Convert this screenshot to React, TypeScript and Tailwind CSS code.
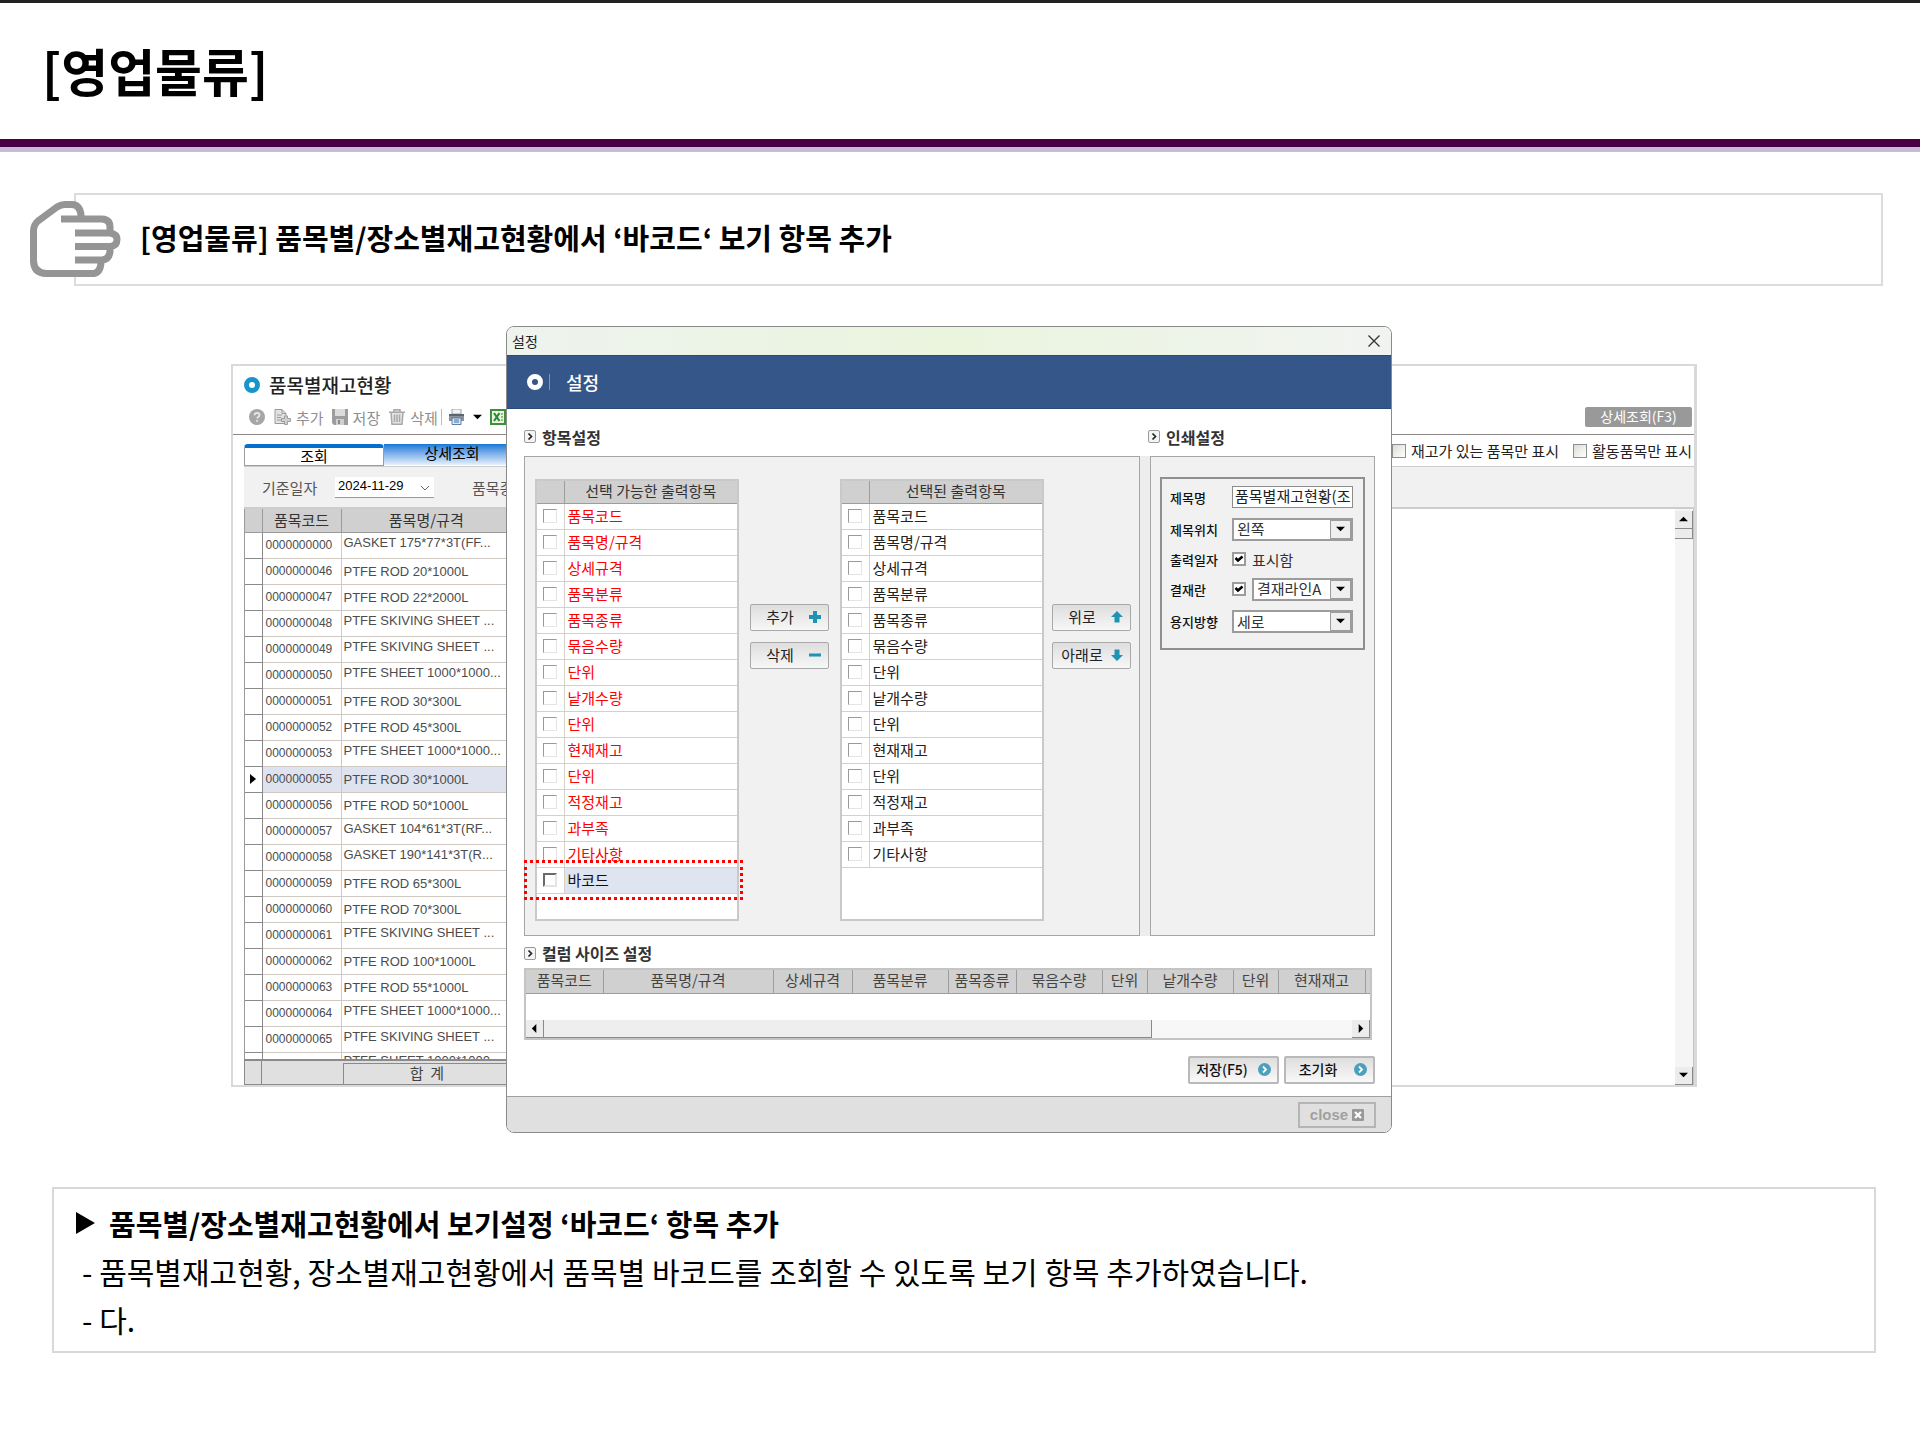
import React from "react";

const items: [string, string, boolean?][] = [
  ["0000000000", "GASKET 175*77*3T(FF...", true],
  ["0000000046", "PTFE ROD 20*1000L"],
  ["0000000047", "PTFE ROD 22*2000L"],
  ["0000000048", "PTFE SKIVING SHEET ...", true],
  ["0000000049", "PTFE SKIVING SHEET ...", true],
  ["0000000050", "PTFE SHEET 1000*1000...", true],
  ["0000000051", "PTFE ROD 30*300L"],
  ["0000000052", "PTFE ROD 45*300L"],
  ["0000000053", "PTFE SHEET 1000*1000...", true],
  ["0000000055", "PTFE ROD 30*1000L"],
  ["0000000056", "PTFE ROD 50*1000L"],
  ["0000000057", "GASKET 104*61*3T(RF...", true],
  ["0000000058", "GASKET 190*141*3T(R...", true],
  ["0000000059", "PTFE ROD 65*300L"],
  ["0000000060", "PTFE ROD 70*300L"],
  ["0000000061", "PTFE SKIVING SHEET ...", true],
  ["0000000062", "PTFE ROD 100*1000L"],
  ["0000000063", "PTFE ROD 55*1000L"],
  ["0000000064", "PTFE SHEET 1000*1000...", true],
  ["0000000065", "PTFE SKIVING SHEET ...", true],
];
const SELECTED = "0000000055";

const fields = [
  "품목코드", "품목명/규격", "상세규격", "품목분류", "품목종류", "묶음수량", "단위",
  "낱개수량", "단위", "현재재고", "단위", "적정재고", "과부족", "기타사항",
];

function HandIcon() {
  return (
    <svg viewBox="0 0 92 76" className="h-[76px] w-[92px]" fill="none" stroke="#959595" strokeWidth="7" strokeLinejoin="round" aria-hidden="true">
      <path fill="#fff" d="M31 18.500H77Q84 20 84 27V32Q88 37 88 40Q88 45 84 50V56Q82 61 76 61V66Q74 72.500 68 72.500H14Q4 72 4 62V29Q4 24 8 20L27 6Q30 3.500 34 3.500H44Q54 4 54 14V18.500Z" stroke="none" />
      <path d="M31 18H72Q80 18.500 80 26V32M51 18V14Q50 4 42 3.500H35Q31 3.500 27 6L8 20Q3.500 24 3.500 30V60Q4 72 16 72.500H64Q71 71 71 60" />
      <path d="M45 32H80Q87 33 87 38.500Q87 45 80 45.500H45M80 46V51Q79 58.500 72 59H45" />
    </svg>
  );
}

function ArrowGlyph({ dir }: { dir: "up" | "down" | "left" | "right" }) {
  const d = {
    up: "M0 6L5 1L10 6Z",
    down: "M0 1L5 6L10 1Z",
    left: "M7 -1L2 4L7 9Z",
    right: "M3 -1L8 4L3 9Z",
  }[dir];
  return (
    <svg viewBox="0 -1 10 10" className="h-[9px] w-[9px]" aria-hidden="true">
      <path d={d} fill="#000" />
    </svg>
  );
}

function ScrollButton({ dir, label }: { dir: "up" | "down" | "left" | "right"; label: string }) {
  return (
    <button aria-label={label} className="flex h-[18px] w-[18px] shrink-0 items-center justify-center border-r border-b border-[#8a8a8a] bg-[#ececec]">
      <ArrowGlyph dir={dir} />
    </button>
  );
}

function ToolLabel({ children }: { children: React.ReactNode }) {
  return <span className="text-[15px] leading-none text-[#8f8f8f]">{children}</span>;
}

function Toolbar() {
  return (
    <div className="flex h-[26px] items-center pl-4">
      <button aria-label="도움말" className="mr-[9px]">
        <svg viewBox="0 0 16 16" className="size-4"><circle cx="8" cy="8" r="8" fill="#a6a6a6" /><path d="M5.500 6.200Q5.700 3.800 8.100 3.800Q10.500 3.900 10.500 6Q10.500 7.200 9.200 7.900Q8.200 8.500 8.200 9.500M8.200 11V12.800" stroke="#e8e8e8" strokeWidth="1.800" fill="none" /></svg>
      </button>
      <button className="mr-2 flex items-center gap-[5px]">
        <svg viewBox="0 0 17 16" className="h-4 w-[17px]"><path d="M1 .5H8L12 4.500V14.500H1Z" fill="#e2e2e2" stroke="#9a9a9a" /><path d="M8 .5V4.500H12M3 6H8M3 8.500H7M3 11H7" fill="none" stroke="#9a9a9a" /><path d="M10.500 7H13.500V9.500H16.500V12.500H13.500V15.500H10.500V12.500H7.500V9.500H10.500Z" fill="#cfcfcf" stroke="#8e8e8e" strokeWidth=".8" /></svg>
        <ToolLabel>추가</ToolLabel>
      </button>
      <button className="mr-[9px] flex items-center gap-[5px]">
        <svg viewBox="0 0 16 16" className="size-4"><path d="M0 0H16V16H2L0 14Z" fill="#9d9d9d" /><path d="M3 0H13V7H3Z" fill="#dcdcdc" /><path d="M4 10H12V16H4Z" fill="#d0d0d0" /><path d="M6 11H8V15H6Z" fill="#8a8a8a" /></svg>
        <ToolLabel>저장</ToolLabel>
      </button>
      <button className="flex items-center gap-[5px]">
        <svg viewBox="0 0 16 16" className="size-4" fill="none" stroke="#a8a8a8" strokeWidth="1.500"><path d="M0 3.200H16M5 3V.8H11V3M2 3.500L3 15.200H13L14 3.500" fill="#e4e4e4" /><path d="M5.500 5.500V13M8 5.500V13M10.500 5.500V13" /></svg>
        <ToolLabel>삭제</ToolLabel>
      </button>
      <span className="ml-[3px] mr-[6px] h-4 w-px bg-[#bdbdbd]" />
      <button aria-label="인쇄" className="mr-2">
        <svg viewBox="0 0 17 16" className="h-4 w-[17px]"><path d="M4 0H13V5H4Z" fill="#f4f4f4" stroke="#8a8a8a" strokeWidth=".8" /><path d="M1 5H16V12H1Z" fill="#8a929c" /><path d="M1 5H16V7H1Z" fill="#5c6570" /><path d="M4 9H13V15.500H4Z" fill="#dbe9f8" stroke="#54749c" strokeWidth=".9" /><path d="M6 11H11M6 13H11" stroke="#3f6fb0" /></svg>
      </button>
      <button aria-label="인쇄 옵션" className="mr-2"><ArrowGlyph dir="down" /></button>
      <button aria-label="엑셀">
        <svg viewBox="0 0 16 16" className="size-4"><path d="M1 1H15V15H1Z" fill="#eaf5e6" stroke="#3f8f3a" strokeWidth="2" /><path d="M4 4L9.500 12M9.500 4L4 12" stroke="#2e8a34" strokeWidth="2.200" /><path d="M11 5H13M11 8H13M11 11H13" stroke="#6cb060" strokeWidth="1.500" /></svg>
      </button>
    </div>
  );
}

function InventoryPanel() {
  return (
    <section className="mr-[223px] ml-[231px] border-2 border-r-[3px] border-[#d9d9d9] bg-white">
      <div className="flex h-[38px] items-center gap-[9px] pl-[11px]">
        <span className="size-4 rounded-full border-[5px] border-[#1a94cb]" />
        <h2 className="pb-0.5 text-[19px] leading-none font-medium text-[#222]">품목별재고현황</h2>
      </div>
      <div className="flex items-start justify-between border-b border-[#8d8787] pb-1">
        <Toolbar />
        <button className="mt-[3px] mr-0.5 h-5 w-[107px] rounded-xs bg-[#999] pb-0.5 text-sm leading-none text-white">상세조회(F3)</button>
      </div>
      <div className="flex h-[31px] items-end justify-between pl-[11px]">
        <div className="flex" role="tablist">
          <button role="tab" aria-selected="true" className="h-[22px] w-[140px] rounded-t-sm border border-t-4 border-[#9c9c9c] border-t-[#0670cf] bg-white pb-1 text-[15px] leading-none text-black">조회</button>
          <button role="tab" aria-selected="false" className="h-[21px] w-[140px] bg-linear-to-b from-[#0f78d6] to-[#e6f1fb] pr-1 pb-1 text-[15px] leading-none text-black">상세조회</button>
        </div>
        <div className="flex h-full items-center gap-[14px] pr-0.5 text-[15px] leading-none text-[#222]">
          <label className="flex items-center gap-[5px]">
            <input type="checkbox" className="size-3.5 appearance-none border border-[#8e8e8e] bg-linear-to-br from-[#dcdcd6] to-white" />
            재고가 있는 품목만 표시
          </label>
          <label className="flex items-center gap-[5px]">
            <input type="checkbox" className="size-3.5 appearance-none border border-[#8e8e8e] bg-linear-to-br from-[#dcdcd6] to-white" />
            활동품목만 표시
          </label>
        </div>
      </div>
      <div className="ml-[11px] flex h-[43px] items-center border-t border-b-2 border-[#cdcdcd] bg-[#f1f1f1] pl-[18px] text-[15px] leading-none text-[#555]">
        <label htmlFor="base-date" className="w-[73px]">기준일자</label>
        <span className="relative flex">
          <input id="base-date" type="text" defaultValue="2024-11-29" className="h-[21px] w-[99px] border-b border-[#999] bg-white pb-0.5 pl-[3px] font-[Liberation_Sans] text-[13px] text-black" />
          <svg viewBox="0 0 10 6" className="absolute top-2 right-1 h-1.5 w-2.5" fill="none" stroke="#666"><path d="M1 1L5 5L9 1" /></svg>
        </span>
        <span className="ml-[38px]">품목종류</span>
      </div>
      <div className="ml-[11px] flex">
        <div className="min-w-0 flex-1">
          <div className="h-[550px] overflow-hidden border-l border-[#9a9a9a]">
            <table className="w-[266px] table-fixed border-collapse text-[13px] text-[#4c4c4c]">
              <colgroup>
                <col className="w-[17px]" />
                <col className="w-[79px]" />
                <col className="w-[170px]" />
              </colgroup>
              <thead>
                <tr className="h-[23px] bg-[#d0d0d0] text-[15px] leading-none text-[#333]">
                  <th className="border-r border-b border-[#9a9a9a] p-0" />
                  <th className="border-r border-b border-[#9a9a9a] p-0 pb-0.5 font-normal">품목코드</th>
                  <th className="border-b border-[#9a9a9a] p-0 pb-0.5 font-normal">품목명/규격</th>
                </tr>
              </thead>
              <tbody className="font-[Liberation_Sans] leading-none">
                {items.map(([code, name, raised]) => (
                  <tr key={code} className={code === SELECTED ? "h-[26px] bg-[#dfe3ef]" : "h-[26px]"}>
                    <td className="border-r border-b border-[#8a8a8a] bg-white p-0">
                      {code === SELECTED && (
                        <svg viewBox="0 0 6 10" className="ml-auto mr-1.5 h-2.5 w-1.5"><path d="M0 0L6 5L0 10Z" /></svg>
                      )}
                    </td>
                    <td className="border-r border-b border-[#cfc9c2] p-0 pl-[3px] text-xs leading-none">{code}</td>
                    <td className={raised ? "border-b border-[#cfc9c2] p-0 pb-1.5 pl-0.5 whitespace-nowrap" : "border-b border-[#cfc9c2] p-0 pl-0.5 whitespace-nowrap"}>{name}</td>
                  </tr>
                ))}
                <tr className="h-[26px]">
                  <td className="border-r border-[#8a8a8a] p-0" />
                  <td className="border-r border-[#cfc9c2] p-0" />
                  <td className="p-0 pb-[9px] pl-0.5 whitespace-nowrap">PTFE SHEET 1000*1000...</td>
                </tr>
              </tbody>
            </table>
          </div>
          <div className="flex h-[26px] w-[266px] border-t-2 border-b border-l border-[#8a8a8a] bg-[#e0e0e0] text-[15px] leading-none text-[#444]">
            <span className="w-[17px] border-r border-[#8a8a8a]" />
            <span className="mr-px w-20" />
            <span className="mt-0.5 flex flex-1 items-center justify-center border-t border-l border-[#8a8a8a] pb-1">합&nbsp; 계</span>
          </div>
        </div>
        <div className="flex w-[19px] flex-col border-r border-[#c4c4c4] bg-[#f5f5f5] pt-0.5">
          <ScrollButton dir="up" label="위로 스크롤" />
          <span className="h-2.5 border-r border-b border-[#8a8a8a] bg-[#ececec]" />
          <span className="flex-1" />
          <ScrollButton dir="down" label="아래로 스크롤" />
        </div>
      </div>
    </section>
  );
}

function SectionTitle({ children }: { children: React.ReactNode }) {
  return (
    <h3 className="flex items-center gap-1.5 text-base leading-none font-bold text-[#333]">
      <svg viewBox="0 0 12 13" className="h-[13px] w-3" fill="none"><rect x=".5" y=".5" width="11" height="12" rx="1.500" fill="#f4f4f4" stroke="#9a9a9a" /><path d="M4.500 3.500L7.500 6.500L4.500 9.500" stroke="#222" strokeWidth="1.700" /></svg>
      {children}
    </h3>
  );
}

function ListBox({ title, available }: { title: string; available?: boolean }) {
  return (
    <div className="relative h-[442px] w-[204px] border-2 border-[#c9c9c9] bg-white">
      <table className="w-full table-fixed border-collapse text-[15px] leading-none">
        <colgroup>
          <col className="w-[27px]" />
          <col />
        </colgroup>
        <thead>
          <tr className="h-[22px] bg-[#d0d0d0] text-[#333]">
            <th className="border-r border-b border-[#9d9d9d] p-0" />
            <th className="border-b border-[#9d9d9d] p-0 pb-0.5 font-normal">{title}</th>
          </tr>
        </thead>
        <tbody>
          {fields.map((f, i) => (
            <tr key={i} className="h-[26px]">
              <td className="border-r border-b border-[#d6d0c8] p-0">
                <input type="checkbox" aria-label={f} className="mx-auto block size-3.5 appearance-none border border-t-[#9a9a9a] border-r-[#e4e4e4] border-b-[#e4e4e4] border-l-[#9a9a9a]" />
              </td>
              <td className={available ? "border-b border-[#d6d0c8] p-0 pb-0.5 pl-[3px] text-[#ff0000]" : "border-b border-[#d6d0c8] p-0 pb-0.5 pl-[3px] text-[#222]"}>{f}</td>
            </tr>
          ))}
          {available && (
            <tr className="h-[26px]">
              <td className="border-r border-b border-[#d6d0c8] p-0">
                <input type="checkbox" aria-label="바코드" className="mx-auto block size-3.5 appearance-none border-2 border-t-[#6a6a6a] border-r-[#e4e4e4] border-b-[#e4e4e4] border-l-[#6a6a6a]" />
              </td>
              <td className="border-b border-[#d6d0c8] bg-[#dfe5f0] p-0 pb-0.5 pl-[3px] text-[#111]">바코드</td>
            </tr>
          )}
        </tbody>
      </table>
      {available && <div className="absolute -right-1.5 bottom-[19px] -left-[13px] h-10 border-[3px] border-dotted border-[#ff0000]" />}
    </div>
  );
}

const buttonIcons = {
  plus: "M4 0H8V4H12V8H8V12H4V8H0V4H4Z",
  minus: "M0 4.500H12V7.500H0Z",
  up: "M6 0L12 6H8.500V11.500H3.500V6H0Z",
  down: "M6 12L0 6H3.500V.5H8.500V6H12Z",
};

function SideButton({ icon, children }: { icon: keyof typeof buttonIcons; children: React.ReactNode }) {
  return (
    <button className="flex h-[27px] w-[79px] items-center rounded-xs border border-[#a9a9a9] bg-linear-to-b from-[#dedede] to-[#f7f7f7] pr-[7px] pb-0.5 text-[15px] leading-none whitespace-nowrap text-[#222]">
      <span className="flex-1 text-center">{children}</span>
      <svg viewBox="0 0 12 12" className="size-3 shrink-0"><path d={buttonIcons[icon]} fill="#1f93b3" /></svg>
    </button>
  );
}

function Combo({ id, value, className }: { id: string; value: string; className: string }) {
  return (
    <span className={className}>
      <select id={id} className="h-[23px] w-full appearance-none border-2 border-[#9c9c9c] bg-white pb-px pl-[3px] text-[15px] leading-none text-[#333]">
        <option>{value}</option>
      </select>
      <span className="pointer-events-none absolute top-0.5 right-0.5 flex h-[19px] w-[21px] items-center justify-center border border-[#9c9c9c] bg-[#efefef]">
        <ArrowGlyph dir="down" />
      </span>
    </span>
  );
}

function Tick({ id }: { id: string }) {
  return (
    <span className="relative mr-1.5 flex">
      <input id={id} type="checkbox" defaultChecked className="size-3.5 appearance-none border-2 border-[#9c9c9c] bg-white" />
      <svg viewBox="0 0 14 14" className="pointer-events-none absolute inset-0 size-3.5" fill="none"><path d="M3.500 6L6 8.500L10.500 4.500" stroke="#000" strokeWidth="2.500" /></svg>
    </span>
  );
}

function PrintSettings() {
  const label = "w-[62px] shrink-0 text-[13px] font-medium text-[#111]";
  return (
    <div className="w-[225px] border border-[#a6a6a6] bg-[#f1f1f1] px-[9px] pt-5">
      <div className="flex h-[173px] flex-col justify-between border-2 border-[#8f8f8f] pt-[7px] pr-2.5 pb-[9px] pl-2 text-[15px] leading-none">
        <div className="flex items-center">
          <label htmlFor="print-title" className={label}>제목명</label>
          <input id="print-title" type="text" defaultValue="품목별재고현황(조" className="h-[22px] w-0 flex-1 border border-[#8c8c8c] bg-white pb-1 pl-0.5 text-[15px] text-[#222]" />
        </div>
        <div className="flex items-center">
          <label htmlFor="title-pos" className={label}>제목위치</label>
          <Combo id="title-pos" value="왼쪽" className="relative flex flex-1" />
        </div>
        <div className="flex h-[18px] items-center">
          <span className={label}>출력일자</span>
          <Tick id="show-date" />
          <label htmlFor="show-date" className="text-[#333]">표시함</label>
        </div>
        <div className="flex items-center">
          <label htmlFor="approval" className={label}>결재란</label>
          <Tick id="approval" />
          <Combo id="approval-line" value="결재라인A" className="relative flex flex-1" />
        </div>
        <div className="flex items-center pb-1.5">
          <label htmlFor="paper" className={label}>용지방향</label>
          <Combo id="paper" value="세로" className="relative flex flex-1" />
        </div>
      </div>
    </div>
  );
}

const columns: [string, string][] = [
  ["품목코드", "w-[77px]"], ["품목명/규격", "w-[170px]"], ["상세규격", "w-[79px]"], ["품목분류", "w-[96px]"],
  ["품목종류", "w-[68px]"], ["묶음수량", "w-[86px]"], ["단위", "w-[45px]"], ["낱개수량", "w-[86px]"],
  ["단위", "w-[45px]"], ["현재재고", "w-[87px]"],
];

function ColumnSizer() {
  return (
    <div className="mr-[3px] flex h-[72px] flex-col justify-between border-2 border-[#c4c4c4] bg-white">
      <table className="w-full table-fixed border-collapse text-[15px] leading-none text-[#444]">
        <thead>
          <tr className="h-[23px] bg-[#d0d0d0]">
            {columns.map(([name, width], i) => (
              <th key={i} className={`${width} border-r border-b border-[#9d9d9d] p-0 pb-1 font-normal`}>{name}</th>
            ))}
            <th className="border-b border-[#9d9d9d] p-0" />
          </tr>
        </thead>
      </table>
      <div className="flex h-[18px] bg-[#f7f7f7]">
        <ScrollButton dir="left" label="왼쪽으로 스크롤" />
        <span className="w-[72%] border-r border-b border-[#8a8a8a] bg-[#eee]" />
        <span className="flex-1" />
        <ScrollButton dir="right" label="오른쪽으로 스크롤" />
      </div>
    </div>
  );
}

function ActionButton({ children }: { children: React.ReactNode }) {
  return (
    <button className="flex h-7 w-[91px] items-center justify-end gap-1 rounded-xs border-2 border-[#b9b9b9] bg-linear-to-b from-[#dedede] to-[#f9f9f9] pr-1.5 pb-0.5 text-sm leading-none font-medium whitespace-nowrap text-[#111]">
      <span className="flex-1 text-center">{children}</span>
      <svg viewBox="0 0 13 13" className="size-[13px] shrink-0" fill="none"><circle cx="6.500" cy="6.500" r="6.500" fill="#4ba0bf" /><path d="M5 3.500L8 6.500L5 9.500" stroke="#fff" strokeWidth="1.800" /></svg>
    </button>
  );
}

function SettingsDialog() {
  return (
    <div role="dialog" aria-label="설정" className="absolute top-0 right-[528px] left-[506px] flex flex-col overflow-hidden rounded-lg border border-[#8a8a8a] bg-white">
      <div className="flex h-7 items-center justify-between bg-linear-to-r from-[#eef3ee] via-[#eaf5de] to-[#f1f3f1] pr-[11px] pl-[5px]">
        <span className="text-sm leading-none text-[#222]">설정</span>
        <button aria-label="닫기">
          <svg viewBox="0 0 12 12" className="size-3" fill="none" stroke="#333" strokeWidth="1.300"><path d="M.5 .5L11.500 11.500M11.500 .5L.5 11.500" /></svg>
        </button>
      </div>
      <div className="flex h-[54px] items-center border-t border-b border-[#2b4a7c] bg-[#345688] pl-5 text-white">
        <span className="size-4 rounded-full border-[5px] border-white" />
        <span className="ml-1.5 h-4 w-px bg-[#7f96b8]" />
        <h2 className="ml-4 text-lg leading-none font-medium">설정</h2>
      </div>
      <div className="flex flex-col pr-4 pl-[17px]">
        <div className="flex h-[47px] items-center pt-2">
          <div className="flex-1"><SectionTitle>항목설정</SectionTitle></div>
          <div className="w-[227px]"><SectionTitle>인쇄설정</SectionTitle></div>
        </div>
        <div className="flex justify-between bg-[#ededed]">
          <div className="flex h-[480px] flex-1 items-start border border-[#a6a6a6] bg-[#f1f1f1] pt-[22px] pl-2.5">
            <ListBox title="선택 가능한 출력항목" available />
            <div className="flex flex-1 flex-col items-center gap-[11px] pt-[125px]">
              <SideButton icon="plus">추가</SideButton>
              <SideButton icon="minus">삭제</SideButton>
            </div>
            <ListBox title="선택된 출력항목" />
            <div className="flex w-[95px] flex-col items-center gap-[11px] pt-[125px]">
              <SideButton icon="up">위로</SideButton>
              <SideButton icon="down">아래로</SideButton>
            </div>
          </div>
          <div className="ml-2.5 flex"><PrintSettings /></div>
        </div>
        <div className="flex h-8 items-center pt-0.5"><SectionTitle>컬럼 사이즈 설정</SectionTitle></div>
        <ColumnSizer />
        <div className="flex justify-end gap-[5px] pt-4 pb-3">
          <ActionButton>저장(F5)</ActionButton>
          <ActionButton>초기화</ActionButton>
        </div>
      </div>
      <div className="flex h-9 items-center justify-end border-t border-[#a0a0a0] bg-[#e0e0e0] pr-[15px]">
        <button className="flex h-[26px] w-[78px] items-center justify-center gap-1 border-2 border-[#b5b5b5] font-[Liberation_Sans] text-[15px] leading-none font-bold text-[#a0a0a0]">
          close
          <svg viewBox="0 0 12 12" className="size-3"><rect width="12" height="12" rx="1" fill="#999" /><path d="M3 3L9 9M9 3L3 9" stroke="#fff" strokeWidth="2.200" /></svg>
        </button>
      </div>
    </div>
  );
}

export default function App() {
  return (
    <div className="min-h-screen border-t-[3px] border-[#222] bg-white font-['Noto_Sans_CJK_KR',sans-serif] text-black">
      <header className="flex h-[149px] items-center border-b-[5px] border-[#c8bcd8] shadow-[inset_0_-8px_0_#480045]">
        <h1 className="pb-2.5 pl-[42px] text-[51px] leading-none font-bold">[영업물류]</h1>
      </header>
      <main>
        <div className="relative mt-[41px] mr-[37px] ml-[74px] flex h-[93px] items-center border-2 border-[#dcdcdc] pb-1 pl-16">
          <span className="absolute top-1.5 -left-[46px]"><HandIcon /></span>
          <p className="text-[29px] leading-none font-bold">[영업물류] 품목별/장소별재고현황에서 ‘바코드‘ 보기 항목 추가</p>
        </div>
        <div className="relative mt-10 pt-[38px] pb-[100px]">
          <InventoryPanel />
          <SettingsDialog />
        </div>
        <section className="mr-11 ml-[52px] border-2 border-[#d8d8d8] pt-2.5 pb-2 pl-[22px] leading-[48px]">
          <h2 className="flex items-center gap-3.5 text-[29px] font-bold">
            <svg viewBox="0 0 19 22" className="h-[22px] w-[19px]"><path d="M0 0L19 11L0 22Z" /></svg>
            품목별/장소별재고현황에서 보기설정 ‘바코드‘ 항목 추가
          </h2>
          <ul className="pl-1.5 text-3xl leading-[48px]">
            <li>- 품목별재고현황, 장소별재고현황에서 품목별 바코드를 조회할 수 있도록 보기 항목 추가하였습니다.</li>
            <li>- 다.</li>
          </ul>
        </section>
      </main>
    </div>
  );
}
